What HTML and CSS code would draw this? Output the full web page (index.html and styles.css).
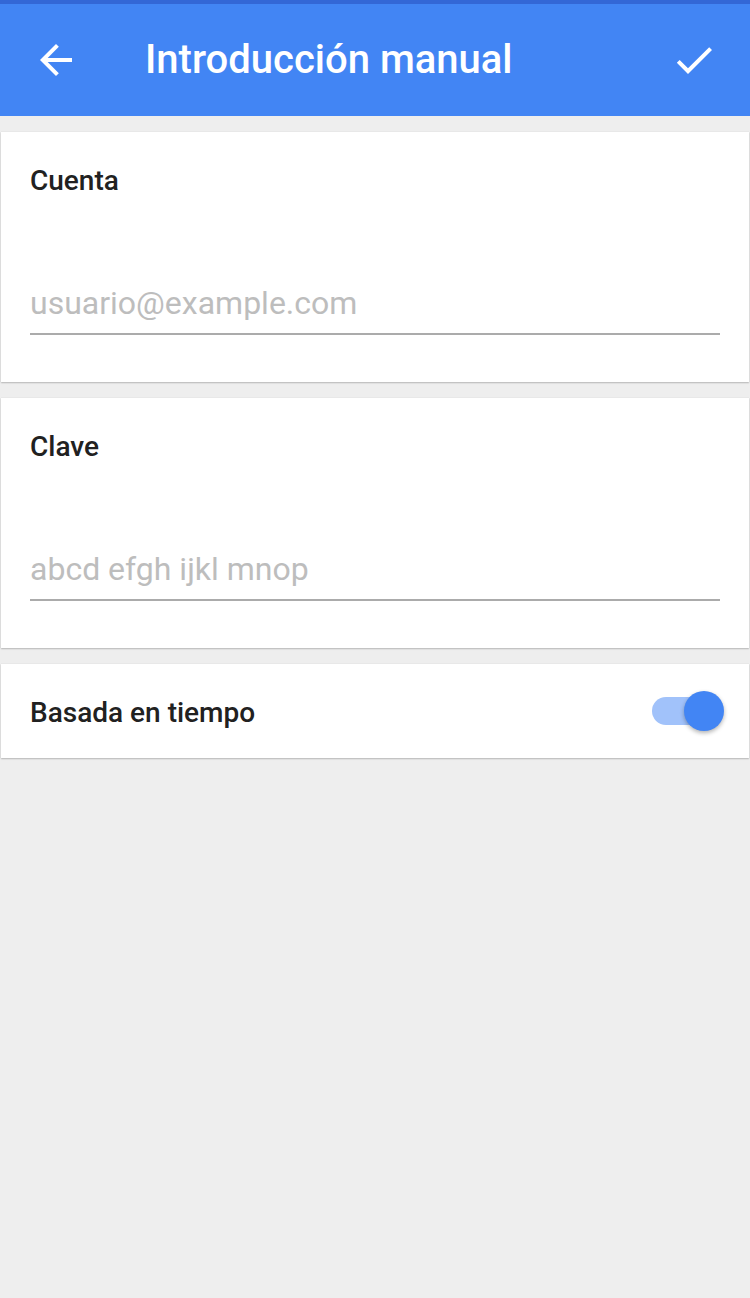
FILE: index.html
```html
<!DOCTYPE html>
<html lang="es">
<head>
<meta charset="utf-8">
<title>Introducción manual</title>
<link rel="stylesheet" href="styles.css">
</head>
<body>
<div class="statusbar"></div>
<header class="appbar">
  <button class="icon-btn back" aria-label="Atrás">
    <svg width="48" height="48" viewBox="0 0 24 24"><path d="M20 11H7.83l5.59-5.59L12 4l-8 8 8 8 1.41-1.41L7.83 13H20v-2z" fill="#fff"/></svg>
  </button>
  <h1 class="title">Introducción manual</h1>
  <button class="icon-btn check" aria-label="Guardar">
    <svg width="48" height="48" viewBox="0 0 24 24"><path d="M9 16.17L4.83 12l-1.42 1.41L9 19 21 7l-1.41-1.41z" fill="#fff"/></svg>
  </button>
</header>
<main class="content">
  <section class="card field-card">
    <label class="label" for="acc">Cuenta</label>
    <input class="input" id="acc" type="text" placeholder="usuario@example.com">
  </section>
  <section class="card field-card">
    <label class="label" for="key">Clave</label>
    <input class="input" id="key" type="text" placeholder="abcd efgh ijkl mnop">
  </section>
  <section class="card switch-card">
    <span class="label switch-label">Basada en tiempo</span>
    <span class="switch"><span class="track"></span><span class="thumb"></span></span>
  </section>
</main>
</body>
</html>
```
FILE: styles.css
```css
* { box-sizing: border-box; }
html, body { margin: 0; padding: 0; }
body {
  background: #eeeeee;
  font-family: Roboto, "Noto Sans", sans-serif;
  width: 750px;
  min-height: 1298px;
}
.statusbar { height: 4px; background: #3367d6; }
.appbar {
  height: 112px;
  background: #4285f4;
  display: flex;
  align-items: center;
  color: #fff;
}
.icon-btn {
  background: none;
  border: 0;
  padding: 0;
  width: 48px;
  height: 48px;
  display: flex;
  align-items: center;
  justify-content: center;
  cursor: pointer;
}
.icon-btn svg { display: block; }
.back { margin-left: 32px; }
.title {
  margin: 0 0 0 65px;
  font-size: 40px;
  font-weight: 500;
  line-height: 40px;
  flex: 1;
}
.check { margin-right: 32px; }
.content {
  padding: 16px 1px;
  display: flex;
  flex-direction: column;
  gap: 16px;
}
.card {
  background: #fff;
  box-shadow: 0 1px 1.5px rgba(0,0,0,0.22), 0 0 1px rgba(0,0,0,0.12);
}
.label {
  font-size: 28px;
  font-weight: 500;
  line-height: 32px;
  color: #212121;
  display: block;
}
.field-card {
  height: 250px;
  padding: 33px 29px 0 29px;
  display: flex;
  flex-direction: column;
}
.input {
  margin-top: 88px;
  border: 0;
  border-bottom: 2px solid #ababab;
  padding: 0 0 12px 0;
  font-family: Roboto, "Noto Sans", sans-serif;
  font-size: 32px;
  line-height: 36px;
  height: 50px;
  color: #212121;
  outline: none;
  background: transparent;
  width: 100%;
}
.input::placeholder { color: #bdbdbd; }
.switch-card {
  height: 94px;
  padding: 0 25px 0 29px;
  display: flex;
  align-items: center;
  justify-content: space-between;
}
.switch-label { margin-top: 3px; }
.switch {
  position: relative;
  width: 72px;
  height: 40px;
  display: block;
}
.track {
  position: absolute;
  left: 0;
  top: 6px;
  width: 66px;
  height: 28px;
  border-radius: 14px;
  background: #a1c2fa;
}
.thumb {
  position: absolute;
  right: 0;
  top: 0;
  width: 40px;
  height: 40px;
  border-radius: 50%;
  background: #4285f4;
  box-shadow: 0 2px 4px rgba(0,0,0,0.3);
}
```
